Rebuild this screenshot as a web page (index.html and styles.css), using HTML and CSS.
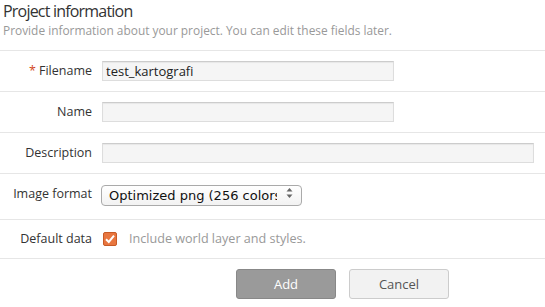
FILE: index.html
```html
<!DOCTYPE html>
<html lang="en">
<head>
    <meta charset="UTF-8">
    <title>Project information</title>
    <link rel="stylesheet" href="styles.css">
</head>
<body>
    <div class="project-form">
        <div class="form-header">
            <h1>Project information</h1>
            <p>Provide information about your project. You can edit these fields later.</p>
        </div>

        <div class="form-row">
            <label for="filename"><span class="required">*</span> Filename</label>
            <input type="text" id="filename" class="field short" value="test_kartografi">
        </div>

        <div class="form-row">
            <label for="name">Name</label>
            <input type="text" id="name" class="field short">
        </div>

        <div class="form-row">
            <label for="description">Description</label>
            <input type="text" id="description" class="field long">
        </div>

        <div class="form-row select-row">
            <label for="format">Image format</label>
            <div class="select-wrap">
                <select id="format">
                    <option>Optimized png (256 colors)</option>
                    <option>png (truecolor)</option>
                    <option>jpeg</option>
                </select>
                <svg class="spin-arrows" width="7" height="12" viewBox="0 0 7 12">
                    <path d="M0.5 4.5 L3.5 1 L6.5 4.5 Z" fill="#666"/>
                    <path d="M0.5 7.5 L3.5 11 L6.5 7.5 Z" fill="#666"/>
                </svg>
            </div>
        </div>

        <div class="form-row check-row">
            <label>Default data</label>
            <div class="check-field">
                <svg class="check-box" width="14" height="14" viewBox="0 0 14 14">
                    <rect x="0.5" y="0.5" width="13" height="13" rx="1.5" fill="#e8763f" stroke="#c75a26"/>
                    <path d="M3 7.2 L5.8 10 L11 3.6" fill="none" stroke="#fff" stroke-width="2"/>
                </svg>
                <span class="hint">Include world layer and styles.</span>
            </div>
        </div>

        <div class="form-actions">
            <button class="btn btn-primary">Add</button>
            <button class="btn">Cancel</button>
        </div>
    </div>
</body>
</html>
```

FILE: styles.css
```css
body {
    margin: 0;
    background: #fff;
    font-family: "Open Sans", "DejaVu Sans", sans-serif;
    color: #333;
}

.project-form {
    width: 545px;
}

.form-header {
    padding: 0 3px 12px;
    border-bottom: 1px solid #e6e6e6;
}

.form-header h1 {
    margin: 0;
    font-size: 16px;
    font-weight: normal;
    letter-spacing: -0.8px;
    line-height: 22px;
    color: #333;
}

.form-header p {
    margin: 0;
    font-size: 11.9px;
    line-height: 16px;
    color: #999;
}

.form-row {
    display: grid;
    grid-template-columns: 92px 1fr;
    column-gap: 10px;
    align-items: center;
    padding: 10px 0;
    border-bottom: 1px solid #e6e6e6;
}

.form-row label {
    text-align: right;
    font-size: 12.5px;
    line-height: 18px;
    color: #333;
}

.required {
    color: #d2471c;
}

.field {
    box-sizing: border-box;
    height: 20px;
    padding: 0 3px;
    border: 1px solid #ddd;
    border-top-color: #ccc;
    background: #f5f5f5;
    box-shadow: inset 0 1px 1px rgba(0, 0, 0, 0.06);
    font-family: "Open Sans", sans-serif;
    font-size: 13px;
    color: #222;
    outline: none;
}

.field.short {
    width: 292px;
}

.field.long {
    width: 432px;
}

.select-row {
    padding: 9px 0 13px;
}

.select-wrap {
    position: relative;
    width: 201px;
    margin-left: -1px;
}

.select-wrap select {
    appearance: none;
    box-sizing: border-box;
    width: 201px;
    height: 21px;
    padding: 1px 24px 0 7px;
    border: 1px solid #aaa;
    border-radius: 4px;
    background: linear-gradient(#fff, #f2f2f2);
    font-family: "DejaVu Sans", sans-serif;
    font-size: 13px;
    color: #111;
}

.spin-arrows {
    position: absolute;
    right: 9px;
    top: 4px;
}

.check-row {
    padding: 10px 0;
}

.check-field {
    display: flex;
    align-items: center;
    gap: 12px;
}

.check-box {
    margin-left: 1px;
}

.hint {
    font-size: 12.6px;
    color: #999;
}

.form-actions {
    display: flex;
    gap: 13px;
    padding: 10px 0 9px 236px;
    border-bottom: 1px solid #e6e6e6;
}

.btn {
    width: 100px;
    height: 30px;
    border: 1px solid #ccc;
    border-radius: 3px;
    background: #f2f2f2;
    font-family: "Open Sans", sans-serif;
    font-size: 13px;
    color: #555;
}

.btn-primary {
    border-color: #888;
    background: #9a9a9a;
    color: #fff;
}
```
